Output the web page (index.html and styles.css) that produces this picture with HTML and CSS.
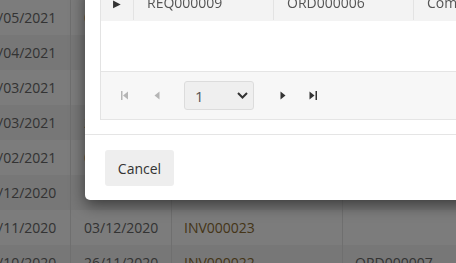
FILE: index.html
```html
<!DOCTYPE html>
<html lang="en">
<head>
    <meta charset="UTF-8">
    <meta name="viewport" content="width=device-width, initial-scale=1.0">
    <title>Invoices</title>
    <link rel="stylesheet" href="styles.css">
</head>
<body>

    <!-- Tabela de fundo -->
    <table class="lista">
        <tr><td class="c1">12/05/2021</td><td class="c2">01/06/2021</td><td class="c3 link">INV000030</td><td class="c4"></td></tr>
        <tr><td class="c1">14/04/2021</td><td class="c2">12/05/2021</td><td class="c3 link">INV000029</td><td class="c4"></td></tr>
        <tr><td class="c1">22/03/2021</td><td class="c2">14/04/2021</td><td class="c3 link">INV000028</td><td class="c4"></td></tr>
        <tr><td class="c1">09/03/2021</td><td class="c2">22/03/2021</td><td class="c3 link">INV000027</td><td class="c4"></td></tr>
        <tr><td class="c1">18/02/2021</td><td class="c2">09/03/2021</td><td class="c3 link">INV000026</td><td class="c4"></td></tr>
        <tr><td class="c1">21/12/2020</td><td class="c2">18/01/2021</td><td class="c3 link">INV000025</td><td class="c4"></td></tr>
        <tr><td class="c1">12/11/2020</td><td class="c2">03/12/2020</td><td class="c3 link">INV000023</td><td class="c4"></td></tr>
        <tr><td class="c1">19/10/2020</td><td class="c2">26/11/2020</td><td class="c3 link">INV000022</td><td class="c4">ORD000007</td></tr>
    </table>

    <div class="overlay"></div>

    <!-- Janela modal -->
    <div class="modal">
        <div class="modal-body">
            <div class="grid">
                <div class="grid-row">
                    <div class="cell seta">&#9654;</div>
                    <div class="cell col-a">REQ000009</div>
                    <div class="cell col-b">ORD000006</div>
                    <div class="cell col-c">Completed</div>
                </div>
                <div class="grid-vazio"></div>
                <div class="pager">
                    <span class="pg off">
                        <svg width="8" height="9" viewBox="0 0 8 9"><rect x="0" y="0" width="1.5" height="9" fill="#b5b5b5"/><path d="M7 0.5 L2 4.5 L7 8.5 Z" fill="#b5b5b5"/></svg>
                    </span>
                    <span class="pg off">
                        <svg width="6" height="9" viewBox="0 0 6 9"><path d="M5.5 0.5 L0.5 4.5 L5.5 8.5 Z" fill="#b5b5b5"/></svg>
                    </span>
                    <div class="pagina">
                        <span>1</span>
                        <svg width="11" height="7" viewBox="0 0 11 7"><path d="M1 1 L5.5 5.5 L10 1" fill="none" stroke="#333" stroke-width="2"/></svg>
                    </div>
                    <span class="pg">
                        <svg width="6" height="9" viewBox="0 0 6 9"><path d="M0.5 0.5 L5.5 4.5 L0.5 8.5 Z" fill="#333"/></svg>
                    </span>
                    <span class="pg">
                        <svg width="8" height="9" viewBox="0 0 8 9"><path d="M0.5 0.5 L5.5 4.5 L0.5 8.5 Z" fill="#333"/><rect x="6.5" y="0" width="1.5" height="9" fill="#333"/></svg>
                    </span>
                </div>
            </div>
        </div>
        <div class="modal-footer">
            <button class="button">Cancel</button>
        </div>
    </div>

</body>
</html>
```

FILE: styles.css
```css
body {
    margin: 0;
    font-family: "Open Sans", Arial, sans-serif;
    font-size: 14px;
    color: #666;
    background-color: #fff;
    overflow: hidden;
}
.lista {
    border-collapse: collapse;
    margin-left: -30px;
}
.lista td {
    height: 35px;
    padding: 0 12px;
    border-right: 1px solid #dedede;
    white-space: nowrap;
}
.lista tr:nth-child(odd) td {
    background-color: #f8f8f8;
}
.lista tr:nth-child(even) td {
    background-color: #efefef;
}
.lista td.c1 { width: 76px; min-width: 76px; }
.lista td.c2 { width: 75px; min-width: 75px; padding-left: 13px; }
.lista td.c3 { width: 146px; min-width: 146px; }
.lista td.c4 { width: 200px; min-width: 200px; }
.link {
    color: #8a6a30;
}
.overlay {
    position: fixed;
    top: 0;
    left: 0;
    right: 0;
    bottom: 0;
    background-color: rgba(0, 0, 0, 0.5);
}
.modal {
    position: absolute;
    left: 85px;
    top: -15px;
    width: 520px;
    background-color: #fff;
    border-radius: 5px;
    box-shadow: 0 5px 15px rgba(0, 0, 0, 0.5);
}
.modal-body {
    padding: 0 0 14px 15px;
    border-bottom: 1px solid #e5e5e5;
}
.grid {
    border-left: 1px solid #e3e3e3;
}
.grid-row {
    display: flex;
    height: 35px;
    background-color: #f3f3f3;
    color: #555;
    border-bottom: 1px solid #f3f3f3;
}
.cell {
    display: flex;
    align-items: center;
    padding-left: 13px;
    border-left: 1px solid #e3e3e3;
    white-space: nowrap;
}
.cell.seta {
    width: 32px;
    padding-left: 0;
    justify-content: center;
    border-left: none;
    font-size: 10px;
    color: #333;
}
.col-a { width: 126px; }
.col-b { width: 126px; }
.col-c { width: 160px; }
.grid-vazio {
    height: 50px;
    border-bottom: 1px solid #e5e5e5;
}
.pager {
    display: flex;
    align-items: center;
    height: 47px;
    padding-left: 19px;
    background-color: #f7f7f7;
    border-bottom: 1px solid #e5e5e5;
}
.pg {
    display: flex;
    align-items: center;
    justify-content: center;
    width: 10px;
    height: 20px;
    margin-right: 22px;
}
.pagina {
    display: flex;
    align-items: center;
    justify-content: space-between;
    box-sizing: border-box;
    width: 70px;
    height: 29px;
    padding: 0 5px 0 10px;
    margin: 0 24px 0 0;
    background-color: #efefef;
    border: 1px solid #dcdcdc;
    border-radius: 3px;
    color: #555;
    font-size: 15px;
}
.pagina + .pg {
    margin-right: 20px;
}
.modal-footer {
    padding: 15px 20px 14px;
}
.button {
    font-family: "Open Sans", Arial, sans-serif;
    font-size: 14px;
    color: #333;
    width: 69px;
    height: 36px;
    border: none;
    border-radius: 3px;
    background-color: #eee;
    cursor: pointer;
}
```
